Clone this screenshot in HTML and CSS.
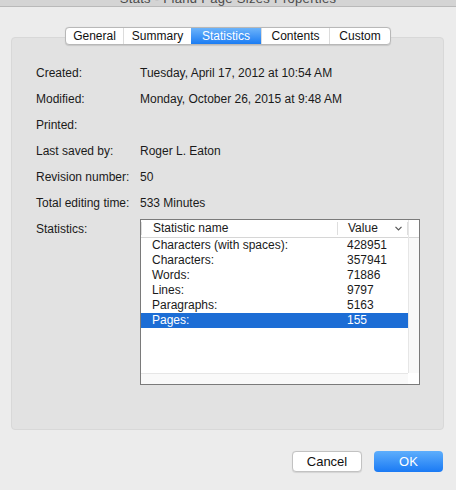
FILE: index.html
```html
<!DOCTYPE html>
<html>
<head>
<meta charset="utf-8">
<link rel="stylesheet" href="styles.css">
</head>
<body>
<div class="titlebar"><span class="title">Stats - Fiand Page Sizes Properties</span></div>
<div class="tabs">
  <div class="tab t-general">General</div>
  <div class="tab t-summary">Summary</div>
  <div class="tab t-stats active">Statistics</div>
  <div class="tab t-contents">Contents</div>
  <div class="tab t-custom">Custom</div>
</div>
<div class="panel">
  <div class="row"><div class="label">Created:</div><div class="value">Tuesday, April 17, 2012 at 10:54 AM</div></div>
  <div class="row"><div class="label">Modified:</div><div class="value">Monday, October 26, 2015 at 9:48 AM</div></div>
  <div class="row"><div class="label">Printed:</div><div class="value"></div></div>
  <div class="row"><div class="label">Last saved by:</div><div class="value">Roger L. Eaton</div></div>
  <div class="row"><div class="label">Revision number:</div><div class="value">50</div></div>
  <div class="row"><div class="label">Total editing time:</div><div class="value">533 Minutes</div></div>
  <div class="stats-row">
    <div class="label stats-label">Statistics:</div>
    <div class="table">
      <div class="content">
        <div class="thead">
          <div class="th th-name">Statistic name</div>
          <div class="th th-value">Value
            <svg class="chev" width="7" height="5" viewBox="0 0 7 5"><path d="M0.5 0.8 L3.5 3.8 L6.5 0.8" fill="none" stroke="#555" stroke-width="1.2"/></svg>
          </div>
        </div>
        <div class="tr"><div class="td-name">Characters (with spaces):</div><div class="td-value">428951</div></div>
        <div class="tr"><div class="td-name">Characters:</div><div class="td-value">357941</div></div>
        <div class="tr"><div class="td-name">Words:</div><div class="td-value">71886</div></div>
        <div class="tr"><div class="td-name">Lines:</div><div class="td-value">9797</div></div>
        <div class="tr"><div class="td-name">Paragraphs:</div><div class="td-value">5163</div></div>
        <div class="tr selected"><div class="td-name">Pages:</div><div class="td-value">155</div></div>
      </div>
      <div class="vscroll"><div class="vhead"></div></div>
      <div class="hscroll"></div>
      <div class="corner"></div>
    </div>
  </div>
</div>
<div class="buttons">
  <div class="btn cancel">Cancel</div>
  <div class="btn ok">OK</div>
</div>
</body>
</html>
```

FILE: styles.css
```css
html, body {
  margin: 0;
  padding: 0;
}
body {
  width: 456px;
  height: 490px;
  background: #ececec;
  font-family: "Liberation Sans", Arial, sans-serif;
  font-size: 12px;
  color: #1a1a1a;
  overflow: hidden;
}
.titlebar {
  height: 6px;
  background: #d4d4d4;
  border-bottom: 1px solid #b9b9b9;
  overflow: hidden;
  display: flex;
  justify-content: center;
}
.title {
  font-size: 13px;
  line-height: 13px;
  margin-top: -8px;
  color: #4a4a4a;
  letter-spacing: 0.3px;
}
.tabs {
  position: relative;
  z-index: 2;
  display: flex;
  margin: 20px 0 0 65px;
  width: 324px;
  height: 16px;
  background: #fff;
  border: 1px solid #b8b8b8;
  border-radius: 4px;
  box-shadow: 0 0.5px 1px rgba(0,0,0,0.12);
  overflow: hidden;
}
.tab {
  height: 16px;
  line-height: 16px;
  text-align: center;
  color: #111;
  border-left: 1px solid #dcdcdc;
}
.tab:first-child { border-left: none; }
.t-general { width: 57px; }
.t-summary { width: 67px; }
.t-stats { width: 70px; }
.t-contents { width: 67px; }
.t-custom { flex: 1; }
.tab.active {
  background: linear-gradient(#6cb3fa, #1b7cf3);
  color: #fff;
  border-left: none;
}
.panel {
  margin: -8px 12px 0 11px;
  height: 369px;
  padding: 22px 0 0 24px;
  background: #e2e2e2;
  border: 1px solid #d8d8d8;
  border-radius: 4px;
}
.row {
  display: flex;
  height: 26px;
  line-height: 26px;
}
.label {
  width: 104px;
  flex: none;
}
.value {
  white-space: nowrap;
}
.stats-row {
  display: flex;
  margin-top: 3px;
}
.stats-label {
  line-height: 20px;
}
.table {
  width: 278px;
  height: 164px;
  border: 1px solid #7a7a7a;
  background: #fff;
  display: grid;
  grid-template-columns: 1fr 11px;
  grid-template-rows: 1fr 11px;
}
.content {
  overflow: hidden;
  background: #fff;
}
.thead {
  display: flex;
  height: 17px;
  border-bottom: 1px solid #d6d6d6;
  line-height: 17px;
}
.th {
  position: relative;
  padding-left: 11px;
}
.th-name {
  width: 184px;
  border-right: 1px solid #dedede;
  border-left: 1px solid #dedede;
  margin: 2px 0;
  line-height: 13px;
}
.th-value {
  flex: 1;
  display: flex;
  align-items: center;
  justify-content: space-between;
  padding-right: 5px;
  padding-left: 10px;
  border-right: 1px solid #dedede;
  margin: 2px 0;
  line-height: 13px;
}
.chev { display: block; }
.tr {
  display: flex;
  height: 15px;
  line-height: 15px;
}
.td-name {
  width: 185px;
  padding-left: 11px;
  white-space: nowrap;
}
.td-value {
  padding-left: 10px;
}
.tr.selected {
  background: #1c6dd5;
  color: #fff;
}
.vscroll {
  background: #f9f9f9;
  border-left: 1px solid #e6e6e6;
}
.vhead {
  height: 17px;
  background: #fff;
  border-bottom: 1px solid #d6d6d6;
}
.hscroll {
  background: #f9f9f9;
  border-top: 1px solid #e6e6e6;
}
.corner {
  background: #fff;
}
.buttons {
  display: flex;
  justify-content: flex-end;
  gap: 12px;
  margin: 21px 13px 0 0;
}
.btn {
  width: 70px;
  height: 21px;
  line-height: 21px;
  text-align: center;
  font-size: 13px;
  border-radius: 4px;
  box-sizing: border-box;
}
.cancel {
  background: #fff;
  border: 1px solid #c2c2c2;
  color: #111;
  line-height: 19px;
  box-shadow: 0 0.5px 1px rgba(0,0,0,0.1);
}
.ok {
  background: linear-gradient(#5eaefc, #1a7af4);
  color: #fff;
  width: 69px;
}
```
